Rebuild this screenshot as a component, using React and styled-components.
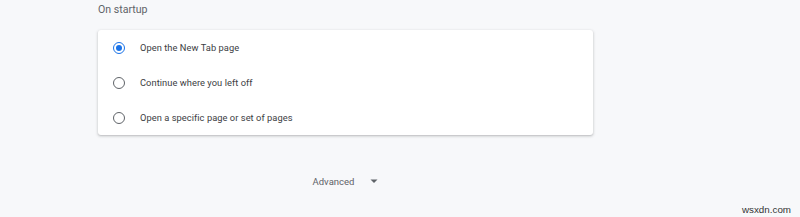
import React, { useState } from "react";
import styled, { createGlobalStyle } from "styled-components";

const GlobalStyle = createGlobalStyle`
  html, body {
    margin: 0;
    padding: 0;
    background: #f7f8fa;
    font-family: Roboto, "Liberation Sans", Arial, sans-serif;
  }
  #root {
    position: relative;
    width: 800px;
    height: 217px;
    overflow: hidden;
  }
`;

const Page = styled.div`
  width: 495px;
  margin-left: 98px;
  padding-top: 4px;
`;

const Heading = styled.h2`
  margin: 0;
  height: 26px;
  line-height: 12px;
  font-size: 10.6px;
  font-weight: 400;
  color: #5f6368;
`;

const Card = styled.div`
  background: #fff;
  border-radius: 3px;
  box-shadow: 0 1px 2px rgba(60, 64, 67, 0.25), 0 1px 3px 1px rgba(60, 64, 67, 0.08);
`;

const Row = styled.label`
  display: flex;
  align-items: center;
  height: 35px;
  padding-left: 14px;
  cursor: pointer;
`;

const Radio = styled.span`
  box-sizing: border-box;
  width: 12px;
  height: 12px;
  border-radius: 50%;
  border: 1.6px solid ${({ checked }) => (checked ? "#1a73e8" : "#5f6368")};
  display: flex;
  align-items: center;
  justify-content: center;
  margin-right: 15px;
  margin-left: 1px;

  &::after {
    content: "";
    width: 6px;
    height: 6px;
    border-radius: 50%;
    background: #1a73e8;
    display: ${({ checked }) => (checked ? "block" : "none")};
  }
`;

const Label = styled.span`
  font-size: 9.3px;
  color: #3c4043;
  letter-spacing: 0.05px;
`;

const AdvancedRow = styled.div`
  display: flex;
  justify-content: center;
  align-items: center;
  margin-top: 40px;
  height: 12px;
`;

const AdvancedText = styled.span`
  font-size: 9.5px;
  color: #5f6368;
  margin-right: 16px;
`;

const Watermark = styled.span`
  position: absolute;
  right: 9px;
  bottom: 2px;
  font-family: "Liberation Sans", Arial, sans-serif;
  font-size: 9.8px;
  color: #333;
`;

const options = [
  "Open the New Tab page",
  "Continue where you left off",
  "Open a specific page or set of pages",
];

export default function App() {
  const [selected, setSelected] = useState(0);
  return (
    <>
      <GlobalStyle />
      <Page>
        <Heading>On startup</Heading>
        <Card>
          {options.map((opt, i) => (
            <Row key={opt} onClick={() => setSelected(i)}>
              <Radio checked={selected === i} />
              <Label>{opt}</Label>
            </Row>
          ))}
        </Card>
        <AdvancedRow>
          <AdvancedText>Advanced</AdvancedText>
          <svg width="8" height="5" viewBox="0 0 8 5">
            <path d="M0.5 0.5 L4 4 L7.5 0.5 Z" fill="#5f6368" />
          </svg>
        </AdvancedRow>
      </Page>
      <Watermark>wsxdn.com</Watermark>
    </>
  );
}
